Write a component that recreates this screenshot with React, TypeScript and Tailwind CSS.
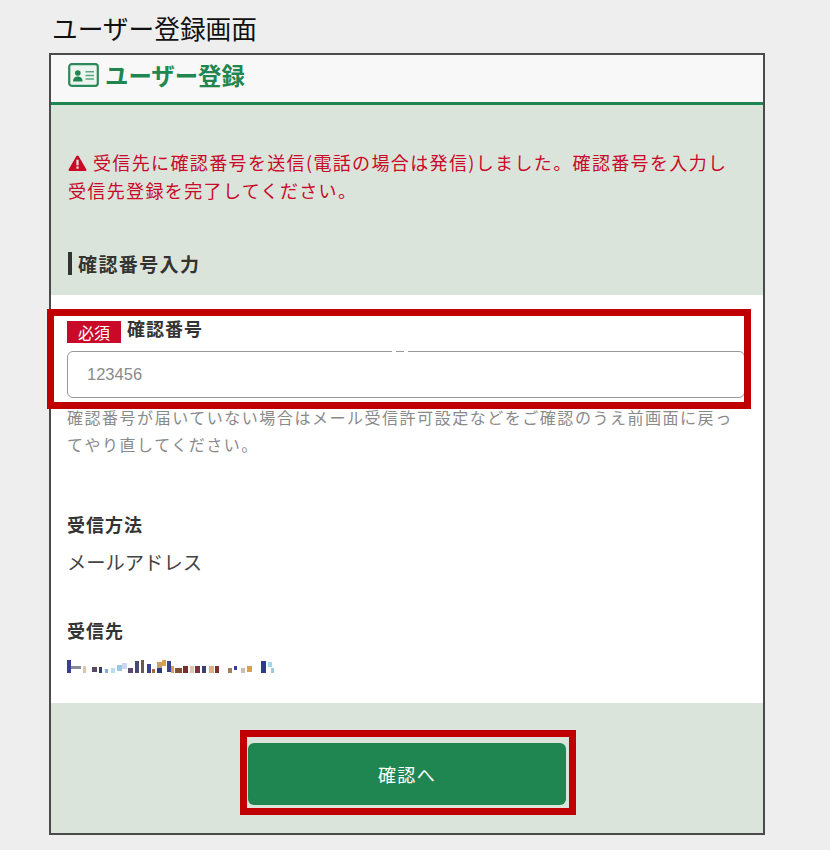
import React from "react";

const jp = { fontFamily: '"Noto Sans CJK JP", "Liberation Sans", sans-serif' };

const mosaic: [number, number, number, number, string][] = [
  [0,0,4,13,"#3b3f8f"],[4,6,10,3,"#8a8a9a"],[16,6,3,7,"#d9c7b0"],[25,7,5,5,"#5a4a60"],[32,7,3,6,"#33406f"],[38,9,3,4,"#7fb0d8"],
  [44,8,4,5,"#b8ddf0"],[50,5,5,6,"#9cc6e4"],[55,3,5,6,"#c9d8f0"],[61,8,5,5,"#5a4a70"],[68,1,4,12,"#4a4a70"],[74,0,3,13,"#6a5a4a"],
  [80,4,4,9,"#3b3f8f"],[85,9,3,4,"#a06a40"],[90,2,5,8,"#c8a070"],[95,0,4,6,"#d9a050"],[90,8,5,5,"#2c3a80"],[100,1,4,11,"#3b3f8f"],[104,6,3,7,"#d9a050"],
  [108,8,7,5,"#805030"],[116,6,5,7,"#7a2c30"],[123,6,4,7,"#d9c7b0"],[128,6,5,7,"#803040"],[135,6,4,7,"#3b4070"],[142,6,5,7,"#e0b080"],
  [148,6,4,7,"#803030"],[161,8,4,5,"#a08060"],[167,6,3,4,"#3b3f8f"],[174,8,4,5,"#c9c0b0"],[180,6,5,6,"#d9a050"],[194,1,5,12,"#2c3a90"],
  [201,2,4,5,"#a0d8f0"],[204,8,3,5,"#a0c8e0"],
];

function Mosaic() {
  return (
    <svg width="208" height="14" viewBox="0 0 208 14" className="block">
      {mosaic.map(([x, y, w, h, c], i) => (
        <rect key={i} x={x} y={y} width={w} height={h} fill={c} />
      ))}
    </svg>
  );
}

function CardIcon() {
  return (
    <svg width="31" height="24" viewBox="0 0 31 24" className="shrink-0">
      <rect x="1.2" y="1.2" width="28.6" height="21.6" rx="2.5" fill="#eef4ef" stroke="#2b8a5c" strokeWidth="2.2" />
      <circle cx="9.8" cy="10" r="2.8" fill="#1f8651" />
      <path d="M5 18.5c0-3.2 2-5 4.8-5s4.8 1.8 4.8 5z" fill="#1f8651" />
      <path d="M17.5 8.8h8.5M17.5 12.4h8.5M17.5 16h8.5" stroke="#5aa67f" strokeWidth="1.5" />
    </svg>
  );
}

function Warn() {
  return (
    <svg width="19" height="16" viewBox="0 0 19 17" className="shrink-0 inline-block mr-[6px] align-[-1px]">
      <path d="M9.5 0.5c.6 0 1 .3 1.3.8l8 13.8c.5.9 0 1.9-1.1 1.9H1.3C.2 17-.3 16 .2 15.1l8-13.8c.3-.5.7-.8 1.3-.8z" fill="#c80a28" />
      <rect x="8.3" y="5" width="2.4" height="6" fill="#dbe4db" />
      <rect x="8.3" y="12.2" width="2.4" height="2.4" fill="#dbe4db" />
    </svg>
  );
}

export default function App() {
  return (
    <div className="min-h-[850px] bg-[#eeeeee] pt-[10px] pl-[49px] relative" style={jp}>
      <h1 className="ml-[3px] text-[25.7px] leading-[36px] text-[#111] font-normal mb-[7px]">ユーザー登録画面</h1>
      <div className="w-[716px] border-2 border-[#4a4a4a] bg-white">
        <div className="h-[50px] bg-[#f8f8f8] border-b-[3px] border-[#1f8651] flex items-start pl-[17px] gap-[6px]">
          <div className="mt-[8px]"><CardIcon /></div>
          <span className="text-[23.4px] leading-[38px] mt-[1px] font-bold text-[#1f8651]">ユーザー登録</span>
        </div>
        <div className="bg-[#dbe4db] h-[190px] px-[17px] pt-[43px]">
          <p className="text-[18px] leading-[28px] text-[#c80a28] tracking-[1.36px] whitespace-nowrap">
            <Warn />受信先に確認番号を送信(電話の場合は発信)しました。確認番号を入力し<br />受信先登録を完了してください。
          </p>
          <h2 className="mt-[48px] border-l-4 border-[#333] pl-[6px] text-[19px] leading-[23px] tracking-[1.4px] font-bold text-[#333]">確認番号入力</h2>
        </div>
        <div className="h-[408px] px-[16px] pt-[20px]">
          <div className="flex items-start h-[36px]">
            <span className="w-[54px] h-[22px] mt-[6px] bg-[#c80a28] text-white text-[16px] leading-[22px] text-center">必須</span>
            <span className="ml-[6px] text-[18px] leading-[26px] tracking-[1px] font-bold text-[#333]">確認番号</span>
          </div>
          <div className="relative w-[678px] h-[47px] border-[1.5px] border-[#999] rounded-[6px] bg-white pl-[19px] flex items-center text-[16.5px] text-[#8a8a8a]" style={{ fontFamily: '"Liberation Sans", sans-serif' }}>
            123456
            <span className="absolute left-[324px] top-[-2px] w-[4px] h-[3px] bg-white" />
            <span className="absolute left-[336px] top-[-2px] w-[4px] h-[3px] bg-white" />
          </div>
          <p className="mt-[6px] text-[16px] leading-[27px] text-[#8a8a8a] tracking-[1.53px] w-[670px]">確認番号が届いていない場合はメール受信許可設定などをご確認のうえ前画面に戻ってやり直してください。</p>
          <h3 className="mt-[54px] text-[18px] leading-[24px] tracking-[1px] font-bold text-[#333]">受信方法</h3>
          <p className="mt-[12px] text-[19.3px] leading-[28px] text-[#444]">メールアドレス</p>
          <h3 className="mt-[42px] text-[18px] leading-[24px] tracking-[1px] font-bold text-[#333]">受信先</h3>
          <div className="mt-[18px]"><Mosaic /></div>
        </div>
        <div className="bg-[#dbe4db] h-[130px] pt-[40px] flex justify-center items-start">
          <button className="w-[318px] h-[62px] bg-[#1f8651] rounded-[6px] text-white text-[18px] tracking-[1.3px]">確認へ</button>
        </div>
      </div>
      <div className="absolute left-[47px] top-[309px] w-[704px] h-[100px] border-[7px] border-[#c00000] pointer-events-none" />
      <div className="absolute left-[240px] top-[730px] w-[336px] h-[85px] border-[7px] border-[#c00000] pointer-events-none" />
    </div>
  );
}
